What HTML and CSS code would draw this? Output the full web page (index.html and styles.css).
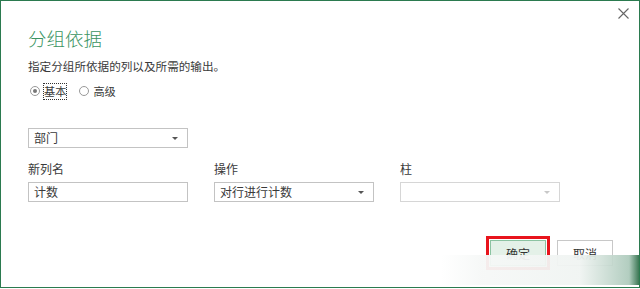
FILE: index.html
```html
<!DOCTYPE html>
<html lang="zh">
<head>
<meta charset="utf-8">
<link rel="stylesheet" href="styles.css">
</head>
<body>
<div class="dialog">
  <button class="close" aria-label="关闭">
    <svg width="11" height="11" viewBox="0 0 11 11"><path d="M0.5 0.5 L10.5 10.5 M10.5 0.5 L0.5 10.5" stroke="#666" stroke-width="1.1" fill="none"/></svg>
  </button>
  <h1 class="title">分组依据</h1>
  <p class="desc">指定分组所依据的列以及所需的输出。</p>
  <div class="radios">
    <label class="radio"><span class="dot checked"></span><span class="rlabel focus">基本</span></label>
    <label class="radio"><span class="dot"></span><span class="rlabel">高级</span></label>
  </div>
  <div class="select first"><span>部门</span><span class="arrow"></span></div>
  <div class="fields">
    <div class="field">
      <div class="label">新列名</div>
      <div class="input"><span>计数</span></div>
    </div>
    <div class="field">
      <div class="label">操作</div>
      <div class="select"><span>对行进行计数</span><span class="arrow"></span></div>
    </div>
    <div class="field">
      <div class="label">柱</div>
      <div class="select disabled"><span></span><span class="arrow"></span></div>
    </div>
  </div>
  <div class="buttons">
    <button class="btn primary">确定</button>
    <button class="btn">取消</button>
  </div>
  <div class="mark"></div>
</div>
</body>
</html>
```
FILE: styles.css
```css
* { box-sizing: border-box; }
html, body { margin: 0; padding: 0; background: #fff; }
body {
  font-family: "Noto Sans CJK SC", "Noto Sans", sans-serif;
  color: #3a3a3a;
  font-size: 12px;
}
.dialog {
  position: relative;
  width: 640px;
  height: 288px;
  border: 1px solid #2b7a4f;
  padding: 0 0 0 27px;
  overflow: hidden;
}
.close {
  position: absolute;
  top: 7px;
  right: 10px;
  width: 11px;
  height: 11px;
  padding: 0;
  border: 0;
  background: none;
  line-height: 0;
}
.title {
  margin: 24px 0 0;
  font-size: 18.5px;
  font-weight: 300;
  line-height: 26px;
  color: #3a9462;
}
.desc {
  margin: 6px 0 0;
  line-height: 18px;
  font-size: 11.6px;
}
.radios {
  margin-top: 8px;
  display: flex;
  gap: 12px;
  height: 16px;
  align-items: center;
  margin-left: 2px;
}
.radio { display: flex; align-items: center; gap: 3px; }
.dot {
  width: 10px; height: 10px;
  border: 1px solid #999;
  border-radius: 50%;
  position: relative;
  background: #fff;
}
.dot.checked::after {
  content: "";
  position: absolute;
  left: 2px; top: 2px;
  width: 4px; height: 4px;
  border-radius: 50%;
  background: #777;
}
.rlabel { line-height: 15px; font-size: 11.2px; padding: 0; border: 1px solid transparent; }
.rlabel.focus { border: 1px dotted #333; }
.select, .input {
  width: 160px;
  height: 20px;
  border: 1px solid #c3c3c3;
  display: flex;
  align-items: center;
  justify-content: space-between;
  padding: 0 9px 0 5px;
  background: #fff;
  line-height: 18px;
}
.select.first { margin-top: 29px; }
.arrow {
  width: 0; height: 0;
  border-left: 3px solid transparent;
  border-right: 3px solid transparent;
  border-top: 3px solid #555;
}
.select.disabled { border-color: #d6d6d6; }
.select.disabled .arrow { border-top-color: #c8c8c8; }
.fields {
  margin-top: 12px;
  display: flex;
  gap: 26px;
}
.field { display: flex; flex-direction: column; gap: 4px; }
.label { line-height: 18px; }
.buttons {
  margin-top: 38px;
  display: flex;
  justify-content: flex-end;
  gap: 11px;
  padding-right: 26px;
}
.btn {
  width: 56px;
  height: 26px;
  font-family: inherit;
  font-size: 12px;
  color: #333;
  background: #fff;
  border: 1px solid #c8c8c8;
  padding: 0;
}
.btn.primary {
  background: #e4f1e8;
  border-color: #8cc3a2;
  outline: 3px solid #e8141c;
  outline-offset: 1px;
}
.mark {
  position: absolute;
  left: 440px;
  right: 0;
  top: 254px;
  height: 30px;
  background: linear-gradient(to right, rgba(255,255,255,0), rgba(246,248,247,0.95) 20%, rgba(240,244,242,0.95) 70%, rgba(170,200,185,0.9) 95%, rgba(60,120,85,1));
}
```
